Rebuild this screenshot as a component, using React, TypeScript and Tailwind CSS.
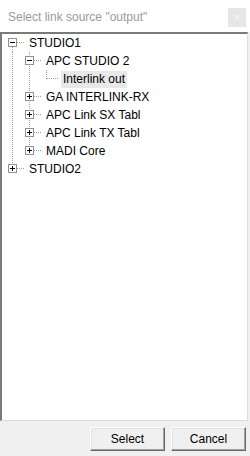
import type { ReactNode } from 'react'

// Classic Win32 tree view dialog: "Select link source".

type Cell = 'line' | 'tee' | 'corner' | 'first' | 'empty'
type Box = 'plus' | 'minus' | null

type Row = {
  label: string
  cells: Cell[]
  box: Box
  selected?: boolean
}

const ROWS: Row[] = [
  { label: 'STUDIO1', cells: ['first'], box: 'minus' },
  { label: 'APC STUDIO 2', cells: ['line', 'tee'], box: 'minus' },
  { label: 'Interlink out', cells: ['line', 'line', 'corner'], box: null, selected: true },
  { label: 'GA INTERLINK-RX', cells: ['line', 'tee'], box: 'plus' },
  { label: 'APC Link SX Tabl', cells: ['line', 'tee'], box: 'plus' },
  { label: 'APC Link TX Tabl', cells: ['line', 'tee'], box: 'plus' },
  { label: 'MADI Core', cells: ['line', 'corner'], box: 'plus' },
  { label: 'STUDIO2', cells: ['corner'], box: 'plus' },
]

const DOT = '#a0a0a0'

function Connector({ cell, last, box }: { cell: Cell; last: boolean; box: Box }) {
  const w = last ? 23 : 17
  const parts: ReactNode[] = []
  const dash = { stroke: DOT, strokeWidth: 1, strokeDasharray: '1 1' }
  if (cell === 'line' || cell === 'tee') {
    parts.push(<line key="v" x1={8.5} y1={0} x2={8.5} y2={18} {...dash} />)
  }
  if (cell === 'corner') {
    parts.push(<line key="v" x1={8.5} y1={0} x2={8.5} y2={9} {...dash} />)
  }
  if (cell === 'first') {
    parts.push(<line key="v" x1={8.5} y1={9} x2={8.5} y2={18} {...dash} />)
  }
  if (last) {
    parts.push(<line key="h" x1={9} y1={8.5} x2={21} y2={8.5} {...dash} />)
  }
  return (
    <svg width={w} height={18} className="shrink-0" shapeRendering="crispEdges">
      {parts}
      {last && box ? (
        <g>
          <rect x={4.5} y={4.5} width={8} height={8} fill="#fff" stroke="#919191" />
          <line x1={6} y1={8.5} x2={11} y2={8.5} stroke="#000" />
          {box === 'plus' ? <line x1={8.5} y1={6} x2={8.5} y2={11} stroke="#000" /> : null}
        </g>
      ) : null}
    </svg>
  )
}

function TreeRow({ row }: { row: Row }) {
  return (
    <div className="flex h-[18px] items-center">
      {row.cells.map((c, i) => (
        <Connector key={i} cell={c} last={i === row.cells.length - 1} box={row.box} />
      ))}
      <span
        className={
          'h-[17px] px-[2px] text-[12px] leading-[17px] whitespace-nowrap text-black ' +
          (row.selected ? 'bg-[#e8e8e8]' : '')
        }
      >
        {row.label}
      </span>
    </div>
  )
}

function DlgButton({ children }: { children: ReactNode }) {
  return (
    <button
      type="button"
      className="h-[24px] w-[75px] border border-t-white border-l-white border-r-[#696969] border-b-[#696969] bg-[#f0f0f0] text-[12px] text-black shadow-[inset_-1px_-1px_0_#a0a0a0,inset_1px_1px_0_#e3e3e3]"
    >
      {children}
    </button>
  )
}

export default function App() {
  return (
    <div
      className="flex h-[456px] w-[250px] flex-col bg-white"
      style={{ fontFamily: '"Liberation Sans", Arial, sans-serif' }}
    >
      <div className="flex h-[32px] shrink-0 justify-between pl-[8px] pr-[4px]">
        <span className="pt-[9px] text-[12px] leading-[16px] text-[#9a9a9a]">
          Select link source "output"
        </span>
        <div className="mt-[8px] flex h-[19px] w-[18px] items-center justify-center bg-[#e6e6e6] text-[11px] leading-none text-[#fafafa]">
          ×
        </div>
      </div>
      <div className="flex flex-1 flex-col bg-[#f0f0f0]">
        <div className="mr-[2px] h-[389px] border-t-2 border-l-2 border-r border-b border-t-[#7a7a7a] border-l-[#7a7a7a] border-r-[#dcdcdc] border-b-[#dcdcdc] bg-white pl-[2px]">
          {ROWS.map((r) => (
            <TreeRow key={r.label} row={r} />
          ))}
        </div>
        <div className="flex justify-end gap-[6px] pt-[6px] pr-[4px]">
          <DlgButton>Select</DlgButton>
          <DlgButton>Cancel</DlgButton>
        </div>
      </div>
    </div>
  )
}
